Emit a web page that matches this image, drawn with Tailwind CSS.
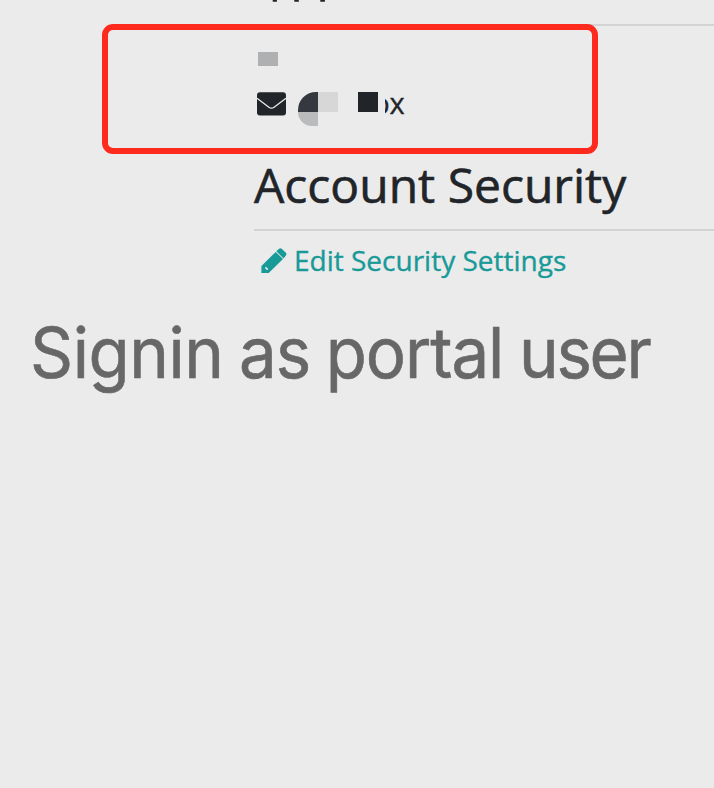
<!DOCTYPE html>
<html lang="en">
<head>
<meta charset="utf-8">
<title>Account Security</title>
<script src="https://cdn.jsdelivr.net/npm/@tailwindcss/browser@4"></script>
</head>
<body class="h-[788px] w-[714px] overflow-hidden bg-[#ebebeb] font-['Open_Sans','Noto_Sans',sans-serif] text-[#212529]">
<main class="relative flex h-full flex-col">
  <section class="ml-[254px] flex h-[154px] flex-col">
    <svg class="h-6 w-full shrink-0" viewBox="0 0 460 24" fill="#212529" aria-hidden="true"><path d="M18.7 0h4.2v1.7h-4.2zM40.3 0h4.5v1.8h-4.5zM66.3 0h4.6v1.8h-4.6z"/></svg>
    <div class="h-0.5 shrink-0 bg-[#d3d3d3]"></div>
    <div class="mt-[26px] ml-1 h-[13.5px] w-5 shrink-0 bg-[#aeb0b1]"></div>
    <div class="mt-[26.5px] ml-[3px] flex h-[34px] items-start">
      <svg class="h-6 w-[29px]" viewBox="0 0 29 24"><rect y="0.3" width="29" height="23.2" rx="3" fill="#212529"/><path d="M0 6.3 11.9 15.2Q14.5 17.2 17.1 15.2L29 6.3" fill="none" stroke="#ebebeb" stroke-width="1.3"/></svg>
      <div class="ml-3 grid w-10 grid-cols-2">
        <div class="h-5 rounded-tl-[18px] bg-[#35393f]"></div>
        <div class="h-5 bg-[#d7d7d7]"></div>
        <div class="h-3.5 rounded-bl-[18px] bg-[#b9bbbd]"></div>
      </div>
      <div class="ml-5 h-5 w-5 bg-[#212529]"></div>
      <div class="-mt-[8px] ml-[7px] flex items-start text-[29px] leading-[38px] [-webkit-text-stroke:0.35px]">
        <span class="flex w-[4.6px] justify-end overflow-hidden">o</span><span>x</span>
      </div>
    </div>
  </section>
  <section class="ml-[254px] flex flex-col">
    <h2 class="h-[75px] whitespace-nowrap text-[48px] leading-[62px] [-webkit-text-stroke:0.6px]">Account Security</h2>
    <div class="h-0.5 bg-[#d3d3d3]"></div>
    <a class="flex h-[60px] items-start pl-[7px] pt-[10px] text-[#179a98]">
      <svg class="mt-[7px] h-[26px] w-[26px]" viewBox="0 0 26 26"><path fill="#179a98" d="M14.7 3.9 22 11 7.7 25.1H.4V17.9ZM15.3 3.3 18.1.7Q19.4-.3 20.7.7L24.9 4.8Q26 6.1 24.9 7.4L22.6 10.4Z"/><path fill="#ebebeb" d="M4 19.4 5.2 18.8 6.1 20 7.2 20.7 6.6 22 5 21.6Z"/></svg>
      <span class="ml-[7px] whitespace-nowrap text-[28px] leading-[38px] [-webkit-text-stroke:0.35px]">Edit Security Settings</span>
    </a>
  </section>
  <h1 class="ml-[30px] mt-[17px] w-max origin-left scale-x-[0.96] whitespace-nowrap font-['Inter',sans-serif] text-[70px] leading-[90px] tracking-[-1.15px] [word-spacing:-2.2px] text-[#676767] [-webkit-text-stroke:0.6px]"><span class="tracking-[-0.5px]">Signin</span> as portal <span class="tracking-[-2.4px]">user</span></h1>
  <div class="pointer-events-none absolute left-[102px] top-[23.5px] h-[130.5px] w-[495.5px] rounded-[11px] border-6 border-[#ff2a1e]"></div>
</main>
</body>
</html>
